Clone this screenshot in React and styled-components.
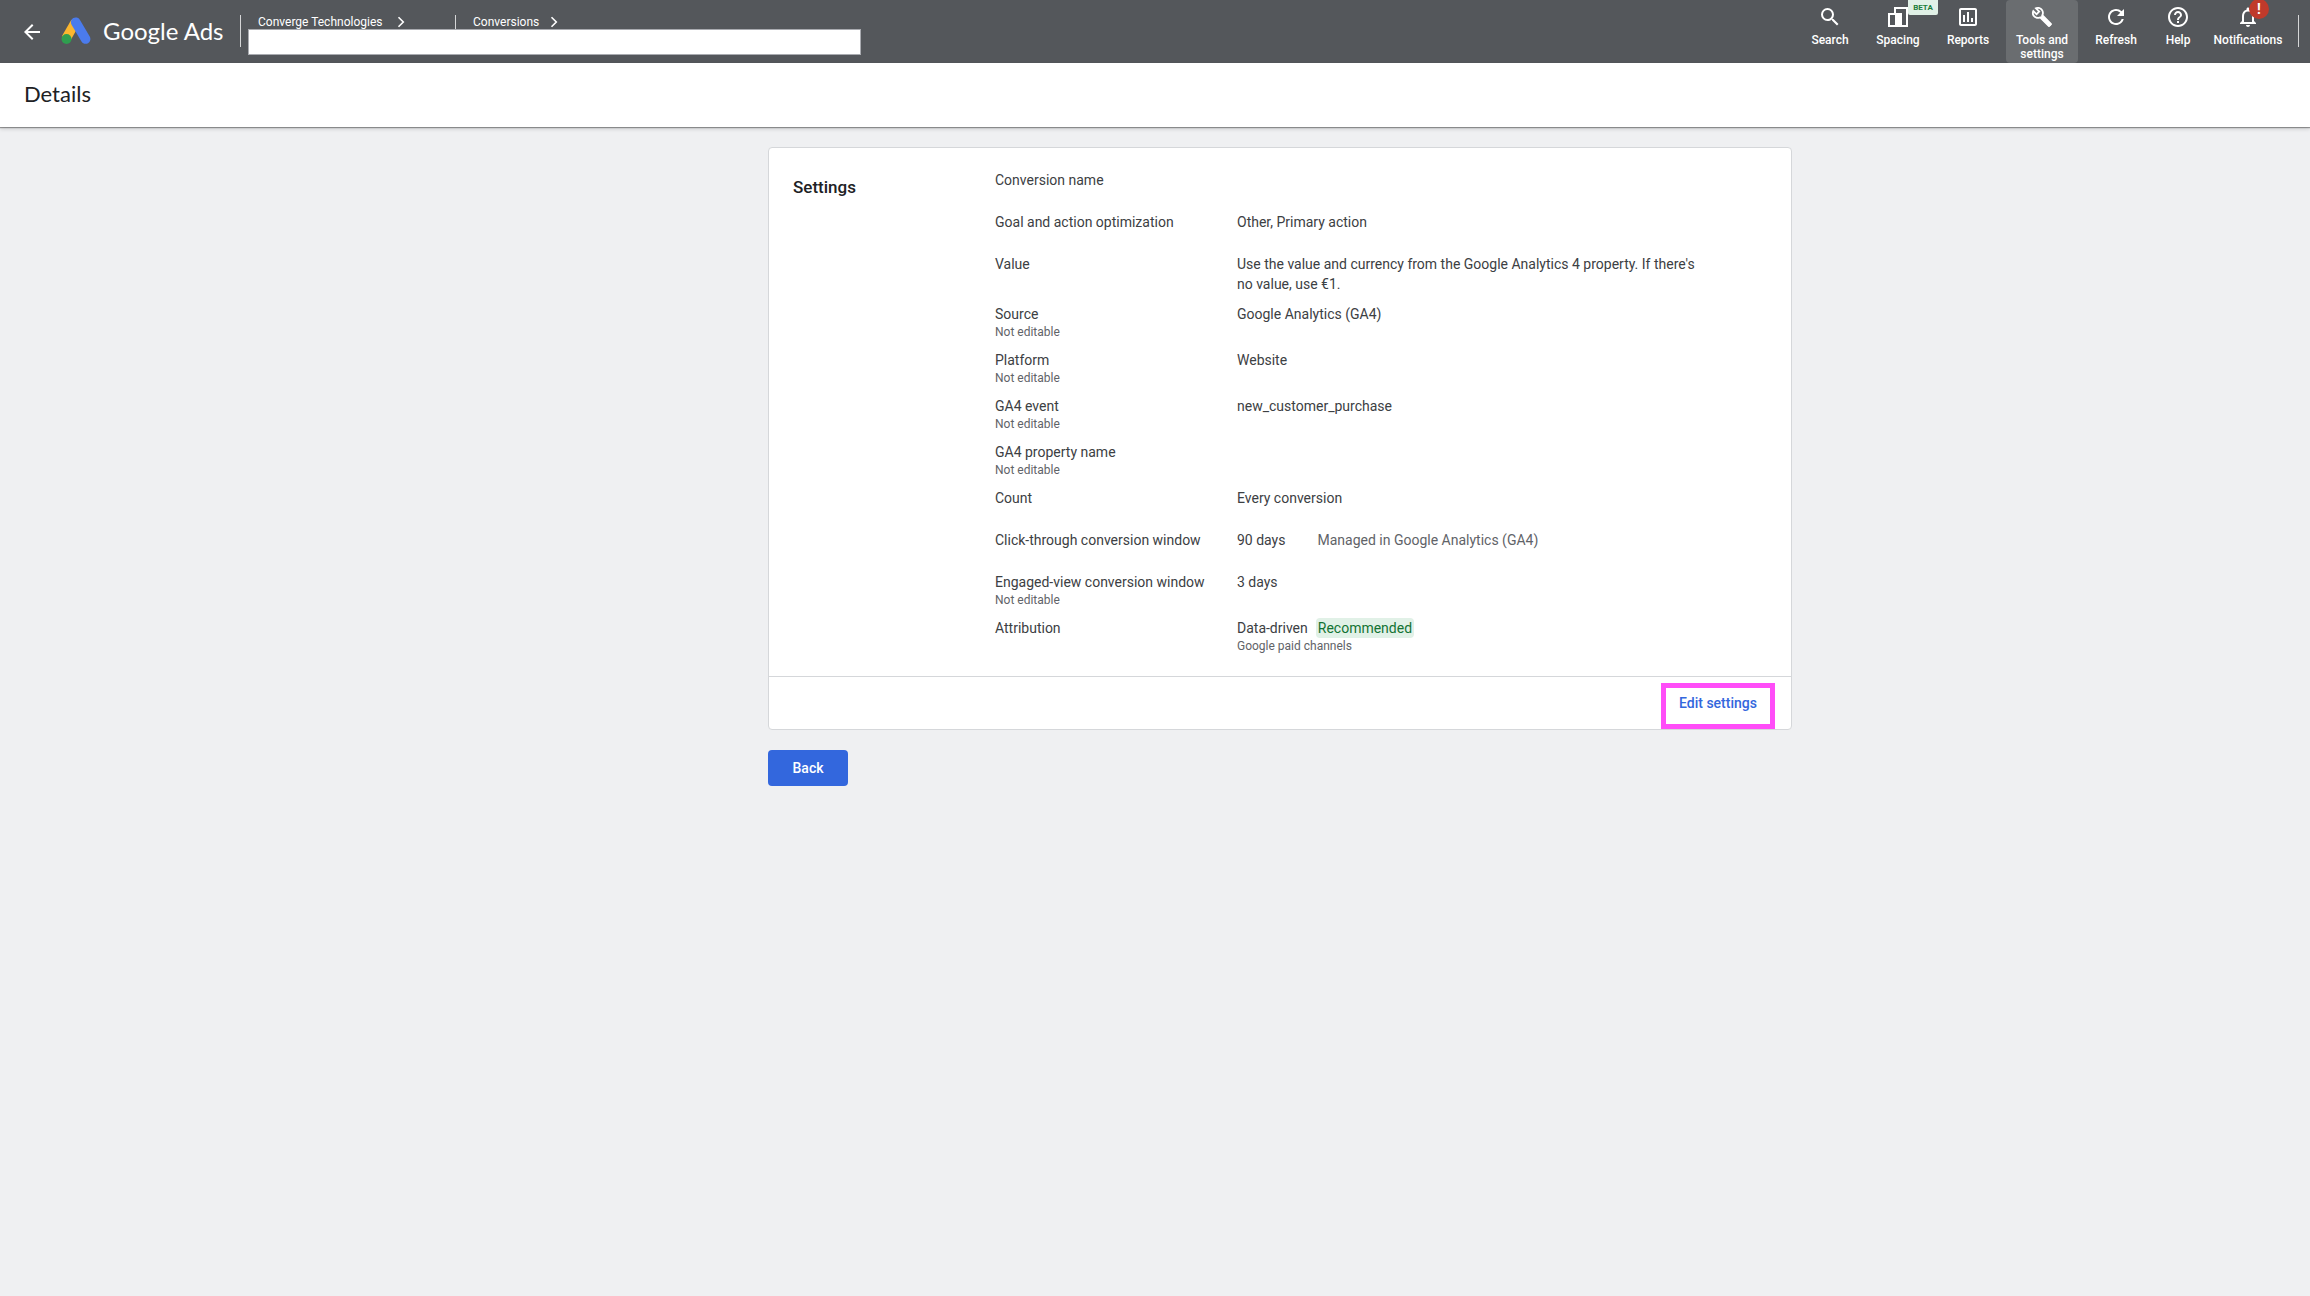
import React from "react";
import styled, { createGlobalStyle, css } from "styled-components";
import {
  MdSearch,
  MdOutlineInsertChartOutlined,
  MdOutlineBuild,
  MdRefresh,
  MdHelpOutline,
  MdNotificationsNone,
  MdArrowBack,
} from "react-icons/md";

const sans = `Roboto, "Liberation Sans", sans-serif`;
const display = `Lato, Roboto, sans-serif`;

const Global = createGlobalStyle`
  * { box-sizing: border-box; }
  body { margin: 0; background: #eff0f2; font-family: ${sans}; font-size: 14px; line-height: 20px; color: #3c4043; }
  button, input { font: inherit; border: 0; padding: 0; background: none; }
  h1, h2, dl, dt, dd { margin: 0; font-weight: 400; }
`;

const TopBar = styled.header`
  display: flex;
  height: 63px;
  background: #54575b;
  color: #fff;
`;
const BackArrow = styled.button`
  display: flex;
  align-items: center;
  padding: 0 16px 0 20px;
  color: #fff;
  cursor: pointer;
`;
const Brand = styled.a`
  display: flex;
  align-items: center;
  gap: 12px;
  width: 180px;
  padding-bottom: 2px;
  color: #fff;
  text-decoration: none;
  font: 24px/32px ${display};
  white-space: nowrap;
`;
const Rule = styled.span`
  width: 1px;
  height: ${(p) => p.$height}px;
  background: #d5d6d7;
`;
const TopRule = styled(Rule)`
  margin-top: 15px;
`;
const Trail = styled.nav`
  display: flex;
  flex-direction: column;
  flex: 0 1 613px;
  margin: 15px 0 0 7px;
`;
const Crumbs = styled.div`
  display: flex;
  height: 14px;
  padding-left: 10px;
`;
const Crumb = styled.a`
  display: flex;
  align-items: center;
  justify-content: space-between;
  width: ${(p) => p.$width}px;
  font-size: 12px;
  line-height: 14px;
  color: #fff;
  text-decoration: none;
`;
const CrumbRule = styled(Rule)`
  margin: 0 17px 0 50px;
`;
const TrailInput = styled.input`
  width: 100%;
  height: 26px;
  padding: 0 8px;
  background: #fff;
  border: 1px solid #a9abb0;
  outline: none;
`;
const Tools = styled.div`
  display: flex;
  gap: 4px;
  margin-left: auto;
`;
const Tool = styled.button`
  position: relative;
  display: flex;
  flex-direction: column;
  align-items: center;
  gap: 4px;
  width: ${(p) => p.$width}px;
  padding-top: 5px;
  color: #fff;
  font-size: 12px;
  font-weight: 500;
  line-height: 14px;
  border-radius: 4px;
  cursor: pointer;
  ${(p) => p.$active && css`background: #6a6d70;`}
`;
const ToolIcon = styled.span`
  display: grid;
  place-items: center;
  width: 24px;
  height: 24px;
`;
const Beta = styled.span`
  position: absolute;
  top: 0;
  left: 42px;
  width: 30px;
  border-radius: 0 0 2px 2px;
  background: #e1f1e7;
  color: #1e7e3c;
  font-size: 8px;
  font-weight: 700;
  line-height: 15px;
`;
const Alert = styled.span`
  position: absolute;
  top: -1px;
  left: 43px;
  width: 20px;
  height: 20px;
  border-radius: 50%;
  background: #c03a2b;
  font-size: 14px;
  font-weight: 700;
  line-height: 20px;
`;
const ToolsEnd = styled(TopRule)`
  margin-left: 4px;
  margin-right: 11px;
`;

const TitleBar = styled.div`
  position: relative;
  padding: 15px 24px 17px;
  background: #fff;
  box-shadow: 0 1px 1px rgba(0, 0, 0, 0.35), 0 2px 4px rgba(0, 0, 0, 0.15);
`;
const Title = styled.h1`
  font: 22px/32px ${display};
  color: #202124;
`;

const Main = styled.main`
  padding: 20px 0 20px 250px;
`;
const Content = styled.div`
  max-width: 1024px;
  margin: 0 auto;
`;
const Card = styled.section`
  background: #fff;
  border: 1px solid #d5d7da;
  border-radius: 4px;
`;
const CardBody = styled.div`
  display: grid;
  grid-template-columns: 202px 1fr;
  padding: 22px 24px;
`;
const CardTitle = styled.h2`
  padding-top: 5px;
  font: 500 17px/24px ${sans};
  color: #202124;
`;
const Rows = styled.dl`
  display: flex;
  flex-direction: column;
  gap: 10px;
`;
const Row = styled.div`
  display: grid;
  grid-template-columns: 242px minmax(0, 472px);
  min-height: ${(p) => (p.$tight ? 36 : 32)}px;
`;
const Note = styled.div`
  font-size: 12px;
  line-height: 16px;
  color: #5f6368;
`;
const Aside = styled.span`
  margin-left: 32px;
  color: #5f6368;
`;
const Chip = styled.span`
  display: inline-block;
  margin-left: 8px;
  padding: 0 2px;
  border-radius: 4px;
  background: #e1f1e7;
  color: #137333;
`;
const CardFooter = styled.div`
  display: flex;
  justify-content: flex-end;
  padding: 6px 16px 0;
  border-top: 1px solid #d5d7da;
`;
const EditButton = styled.button`
  width: 114px;
  height: 46px;
  padding-bottom: 6px;
  border: 5px solid #ff4df8;
  color: #3367dd;
  font-weight: 500;
  line-height: 20px;
  white-space: nowrap;
  cursor: pointer;
`;
const BackButton = styled.button`
  margin-top: 20px;
  height: 36px;
  width: 80px;
  border-radius: 4px;
  background: #3367dd;
  color: #fff;
  font-weight: 500;
  cursor: pointer;
`;

const Chevron = () => (
  <svg width="8" height="12" viewBox="0 0 8 12" fill="none" stroke="#fff" strokeWidth="1.6" aria-hidden="true">
    <path d="M1.5 1.2 6.3 6 1.5 10.8" />
  </svg>
);
const AdsLogo = () => (
  <svg width="31" height="28" viewBox="0 0 31 28" aria-hidden="true">
    <path d="M15.500 5 6 21.700" stroke="#fbb62f" strokeWidth="9.600" />
    <path d="M15.700 5.200 25.600 22" stroke="#4b7bec" strokeWidth="9.600" strokeLinecap="round" />
    <circle cx="6.500" cy="22" r="5" fill="#2f9e4f" />
  </svg>
);
const SpacingIcon = () => (
  <svg width="24" height="24" viewBox="0 0 24 24" fill="none" stroke="#fff" strokeWidth="2" aria-hidden="true">
    <path d="M9 9V3h12v18H3V9h6" />
    <path d="M9 8h7v13H9z" fill="#fff" stroke="none" />
  </svg>
);
const WrenchIcon = () => (
  <svg width="22" height="22" viewBox="0 0 24 24" aria-hidden="true">
    <MdOutlineBuild size={24} />
    <path d="M12.500 12.500 20 20" stroke="#fff" strokeWidth="4" strokeLinecap="round" />
  </svg>
);

const tools = [
  { label: "Search", width: 64, icon: <MdSearch size={24} /> },
  { label: "Spacing", width: 64, icon: <SpacingIcon />, extra: <Beta>BETA</Beta> },
  { label: "Reports", width: 68, icon: <MdOutlineInsertChartOutlined size={24} /> },
  { label: "Tools and settings", width: 72, icon: <WrenchIcon />, active: true },
  { label: "Refresh", width: 68, icon: <MdRefresh size={24} /> },
  { label: "Help", width: 48, icon: <MdHelpOutline size={24} /> },
  { label: "Notifications", width: 84, icon: <MdNotificationsNone size={24} />, extra: <Alert>!</Alert> },
];

const rows = [
  { label: "Conversion name" },
  { label: "Goal and action optimization", value: "Other, Primary action" },
  {
    label: "Value",
    value: "Use the value and currency from the Google Analytics 4 property. If there's no value, use €1.",
  },
  { label: "Source", locked: true, value: "Google Analytics (GA4)" },
  { label: "Platform", locked: true, value: "Website" },
  { label: "GA4 event", locked: true, value: "new_customer_purchase" },
  { label: "GA4 property name", locked: true },
  { label: "Count", value: "Every conversion" },
  {
    label: "Click-through conversion window",
    value: (
      <>
        90 days<Aside>Managed in Google Analytics (GA4)</Aside>
      </>
    ),
  },
  { label: "Engaged-view conversion window", locked: true, value: "3 days" },
  {
    label: "Attribution",
    value: (
      <>
        Data-driven<Chip>Recommended</Chip>
        <Note>Google paid channels</Note>
      </>
    ),
  },
];

export default function App() {
  return (
    <>
      <Global />
      <TopBar>
        <BackArrow aria-label="Go back">
          <MdArrowBack size={24} />
        </BackArrow>
        <Brand href="#">
          <AdsLogo />
          <span>Google Ads</span>
        </Brand>
        <TopRule $height={32} />
        <Trail aria-label="Breadcrumb">
          <Crumbs>
            <Crumb href="#" $width={147}>
              Converge Technologies <Chevron />
            </Crumb>
            <CrumbRule $height={14} />
            <Crumb href="#" $width={85}>
              Conversions <Chevron />
            </Crumb>
          </Crumbs>
          <TrailInput aria-label="Conversion" />
        </Trail>
        <Tools>
          {tools.map((t) => (
            <Tool key={t.label} $width={t.width} $active={t.active}>
              <ToolIcon>{t.icon}</ToolIcon>
              <span>{t.label}</span>
              {t.extra}
            </Tool>
          ))}
          <ToolsEnd $height={32} />
        </Tools>
      </TopBar>
      <TitleBar>
        <Title>Details</Title>
      </TitleBar>
      <Main>
        <Content>
          <Card>
            <CardBody>
              <CardTitle>Settings</CardTitle>
              <Rows>
                {rows.map((r) => (
                  <Row key={r.label} $tight={r.locked}>
                    <dt>
                      {r.label}
                      {r.locked && <Note>Not editable</Note>}
                    </dt>
                    <dd>{r.value}</dd>
                  </Row>
                ))}
              </Rows>
            </CardBody>
            <CardFooter>
              <EditButton>Edit settings</EditButton>
            </CardFooter>
          </Card>
          <BackButton>Back</BackButton>
        </Content>
      </Main>
    </>
  );
}
